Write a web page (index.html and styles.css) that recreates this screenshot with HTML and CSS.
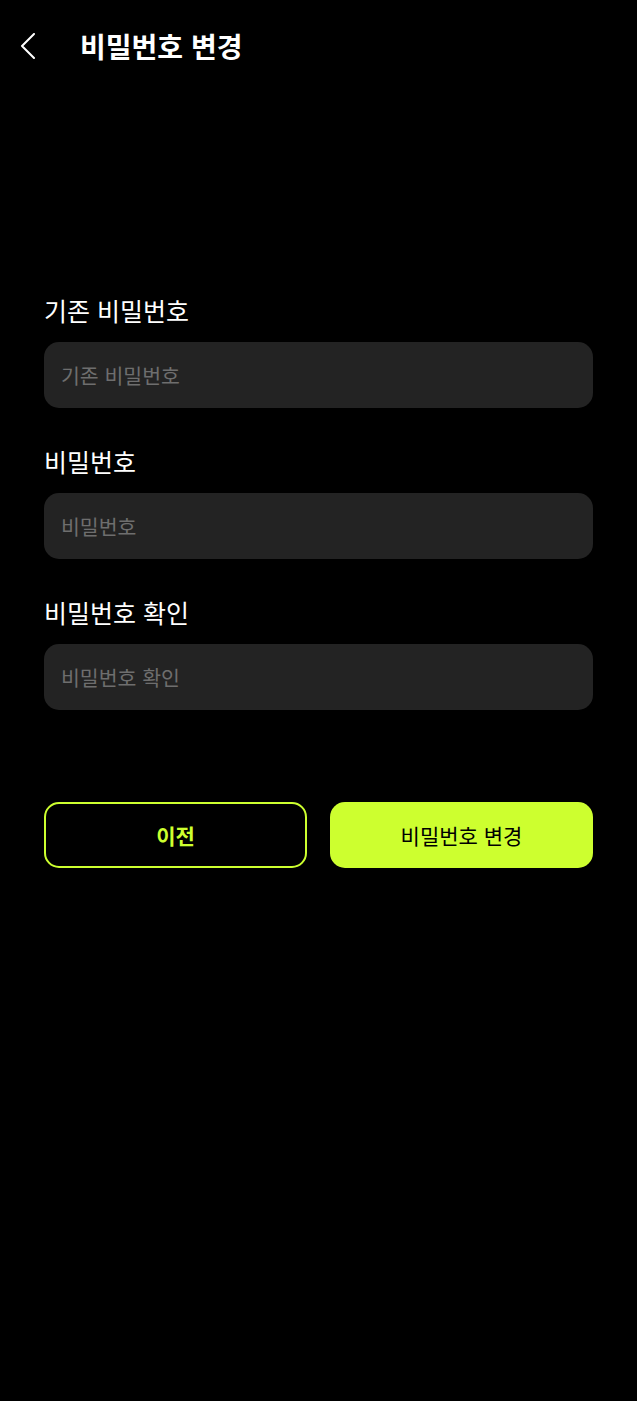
FILE: index.html
```html
<!DOCTYPE html>
<html lang="ko">
<head>
<meta charset="utf-8">
<link rel="stylesheet" href="styles.css">
</head>
<body>
<div class="page">
  <header class="header">
    <button class="back" aria-label="뒤로">
      <svg width="16" height="26" viewBox="0 0 16 26"><path d="M14 1 L2 13 L14 25" fill="none" stroke="#fff" stroke-width="2" stroke-linecap="round" stroke-linejoin="round"/></svg>
    </button>
    <h1 class="title">비밀번호 변경</h1>
  </header>
  <main class="form">
    <div class="field">
      <label class="label">기존 비밀번호</label>
      <input class="input" type="password" placeholder="기존 비밀번호">
    </div>
    <div class="field">
      <label class="label">비밀번호</label>
      <input class="input" type="password" placeholder="비밀번호">
    </div>
    <div class="field">
      <label class="label">비밀번호 확인</label>
      <input class="input" type="password" placeholder="비밀번호 확인">
    </div>
    <div class="actions">
      <button class="btn btn-outline">이전</button>
      <button class="btn btn-primary">비밀번호 변경</button>
    </div>
  </main>
</div>
</body>
</html>
```
FILE: styles.css
```css
* { box-sizing: border-box; }
html, body { margin: 0; padding: 0; background: #000; }
body {
  font-family: "Noto Sans CJK KR", "Noto Sans", sans-serif;
  color: #fff;
  min-height: 1401px;
}
.header {
  height: 92px;
  display: flex;
  align-items: center;
  padding-left: 20px;
}
.back {
  background: none;
  border: 0;
  padding: 0;
  width: 16px;
  height: 26px;
  margin-right: 44px;
  display: flex;
}
.title {
  margin: 0;
  font-size: 28px;
  font-weight: 700;
  line-height: 1;
}
.form {
  padding: 202px 44px 0;
}
.field {
  display: flex;
  flex-direction: column;
  gap: 16px;
  margin-bottom: 37px;
}
.label {
  font-size: 25px;
  line-height: 32px;
  font-weight: 400;
}
.input {
  height: 66px;
  border: 0;
  border-radius: 15px;
  background: #232323;
  padding: 0 17px;
  font-family: inherit;
  font-size: 20.5px;
  color: #fff;
  outline: none;
}
.input::placeholder { color: #6e6e6e; }
.actions {
  margin-top: 92px;
  display: grid;
  grid-template-columns: 1fr 1fr;
  gap: 23px;
}
.btn {
  height: 66px;
  border-radius: 15px;
  font-family: inherit;
  font-size: 21px;
}
.btn-outline {
  background: #000;
  border: 2px solid #cdff2f;
  color: #cdff2f;
  font-weight: 700;
}
.btn-primary {
  background: #cdff2f;
  border: 0;
  color: #000;
  font-weight: 400;
}
```
